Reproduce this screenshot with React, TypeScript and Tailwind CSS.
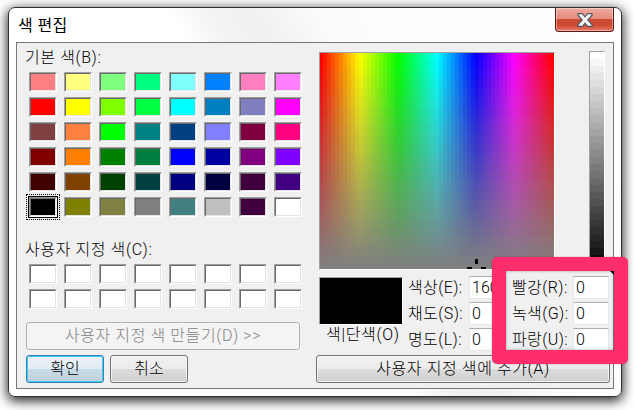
import type { ReactNode } from 'react';

const BASIC = [
  ['#ff8080', '#ffff80', '#80ff80', '#00ff80', '#80ffff', '#0080ff', '#ff80c0', '#ff80ff'],
  ['#ff0000', '#ffff00', '#80ff00', '#00ff40', '#00ffff', '#0080c0', '#8080c0', '#ff00ff'],
  ['#804040', '#ff8040', '#00ff00', '#008080', '#004080', '#8080ff', '#800040', '#ff0080'],
  ['#800000', '#ff8000', '#008000', '#008040', '#0000ff', '#0000a0', '#800080', '#8000ff'],
  ['#400000', '#804000', '#004000', '#004040', '#000080', '#000040', '#400040', '#400080'],
  ['#000000', '#808000', '#808040', '#808080', '#408080', '#c0c0c0', '#400040', '#ffffff'],
];
const CUSTOM = [Array(8).fill('#ffffff'), Array(8).fill('#ffffff')];

function Swatch({ color, selected }: { color: string; selected?: boolean }) {
  return (
    <div className="relative h-5 w-7 border border-b-white border-l-[#a0a0a0] border-r-white border-t-[#a0a0a0]">
      <div
        className="h-full w-full border border-b-[#e3e3e3] border-l-[#696969] border-r-[#e3e3e3] border-t-[#696969]"
        style={{ backgroundColor: color }}
      />
      {selected && (
        <>
          <div className="absolute -inset-[2px] border border-black" />
          <div className="absolute -inset-[4px] border border-dotted border-black" />
        </>
      )}
    </div>
  );
}

function Swatches({ rows, selected }: { rows: string[][]; selected?: boolean }) {
  return (
    <div className="ml-[3px] grid w-[273px] grid-cols-8 gap-x-[7px] gap-y-[5px]">
      {rows.map((r, i) =>
        r.map((c, j) => <Swatch key={`${i}-${j}`} color={c} selected={selected && i === 5 && j === 0} />),
      )}
    </div>
  );
}

function Spectrum() {
  return (
    <div className="relative h-[218px] w-[236px] overflow-hidden border border-b-white border-l-[#a0a0a0] border-r-white border-t-[#a0a0a0]">
      <div className="flex h-full overflow-hidden">
        {Array.from({ length: 59 }, (_, i) => (
          <div
            key={i}
            className={i === 0 ? 'w-[3px] shrink-0' : 'w-1 shrink-0'}
            style={{ backgroundColor: `hsl(${(i / 58) * 360} 100% 50%)` }}
          />
        ))}
      </div>
      <div className="absolute inset-0 flex flex-col overflow-hidden">
        {Array.from({ length: 31 }, (_, i) => (
          <div key={i} className="h-[7px] shrink-0" style={{ backgroundColor: `rgba(128,128,128,${i / 30})` }} />
        ))}
      </div>
      <svg className="absolute left-[146px] top-[206px]" width="20" height="20" shapeRendering="crispEdges">
        <path d="M9 0h3v5h-3zM1 8h5v3H1zM15 8h5v3h-5zM9 14h3v5h-3z" />
      </svg>
    </div>
  );
}

function Luminance() {
  return (
    <div className="h-[219px] w-4 overflow-hidden border border-b-white border-l-[#a0a0a0] border-r-white border-t-[#a0a0a0]">
      {Array.from({ length: 31 }, (_, i) => {
        const v = Math.max(0, Math.round(255 - i * 8.3));
        return <div key={i} className="h-[7px]" style={{ backgroundColor: `rgb(${v},${v},${v})` }} />;
      })}
    </div>
  );
}

function Button({ className, children }: { className: string; children: ReactNode }) {
  return (
    <button className={`flex h-7 items-center justify-center rounded-[3px] border ${className}`}>{children}</button>
  );
}

const NORMAL =
  'border-[#707070] bg-[linear-gradient(#f2f2f2,#ebebeb_50%,#dddddd_50%,#cfcfcf)] shadow-[inset_0_0_0_1px_#fafafacc]';

function Field({ label, value }: { label: string; value: string }) {
  return (
    <div className="flex items-center">
      <span className="w-[61px] whitespace-nowrap tracking-[0.4px]">{label}</span>
      <div className="flex h-[23px] w-9 items-center border border-[#e2e6ee] border-t-[#abadb3] bg-white pl-[2px]">
        {value}
      </div>
    </div>
  );
}

export default function App() {
  return (
    <div className="relative h-[410px] w-[634px] overflow-hidden bg-white pl-2 pt-[7px] font-['Roboto','Noto_Sans_CJK_KR',sans-serif] text-[16px] font-light leading-5 text-black">
      <div className="h-[390px] w-[614px] rounded-[7px] border border-[#303030] bg-[linear-gradient(58deg,#fff_0%,#fff_47%,#f4f4f4_51%,#f0f0f0_56%,#fcfcfc_65%,#fff)] shadow-[0_3px_12px_1px_rgba(0,0,0,0.85)]">
        <div className="flex h-[34px] justify-between pl-[9px] pr-[7px]">
          <h1 className="pt-2 text-[16px] font-normal tracking-[0.4px]">색 편집</h1>
          <button className="flex h-6 w-[59px] items-center justify-center rounded-b-[4px] border border-t-0 border-[#5c1a16] bg-[linear-gradient(#efaca0,#e58c7c_46%,#ca4a32_48%,#ce4a30_75%,#e9796a)] shadow-[inset_0_0_0_1px_#ffffff66]">
            <svg width="16" height="14" viewBox="0 0 16 14">
              <path
                d="M1 .7h4.4L8 3.8 10.6.7H15v1.5L10.8 7l4.2 4.5v1.8h-4.5L8 10.2l-2.5 3.1H1v-1.8L5.2 7 1 2.2z"
                fill="#f4f4f4"
                stroke="#535666"
                strokeWidth="1.2"
              />
            </svg>
          </button>
        </div>
        <div className="ml-[7px] flex h-[347px] w-[598px] border border-[#777] bg-[#f0f0f0]">
          <div className="ml-[8px] flex w-[275px] flex-col pl-px">
            <div className="-ml-px mt-[5px] h-6 tracking-[0.6px]">기본 색(B):</div>
            <Swatches rows={BASIC} selected />
            <div className="-ml-px mt-[22px] h-[25px] pt-px tracking-[0.6px]">사용자 지정 색(C):</div>
            <Swatches rows={CUSTOM} />
            <Button className="mt-[13px] w-[274px] border-[#adb2b5] bg-[#f4f4f4] tracking-[0.6px] text-[#838383]">
              사용자 지정 색 만들기(D) &gt;&gt;
            </Button>
            <div className="mt-[5px] flex gap-[6px]">
              <Button className="w-[78px] border-[#3c7fb1] bg-[linear-gradient(#edf3f7,#dfebf3_50%,#c8dce8_50%,#bdd0dc)] shadow-[inset_0_0_0_1px_#36cdf5]">
                확인
              </Button>
              <Button className={`w-[78px] ${NORMAL}`}>취소</Button>
            </div>
          </div>
          <div className="ml-4 flex w-[294px] flex-col">
            <div className="ml-[3px] mt-2 flex h-[226px] gap-[34px]">
              <div className="pt-px">
                <Spectrum />
              </div>
              <Luminance />
            </div>
            <div className="ml-[3px] flex h-[78px]">
              <div className="flex w-[84px] flex-col">
                <div className="h-12 border border-b-white border-l-[#a0a0a0] border-r-white border-t-[#a0a0a0] bg-black" />
                <div className="whitespace-nowrap pl-[7px] tracking-[0.7px]">색|단색(O)</div>
              </div>
              <div className="ml-[5px] mt-[-1px] flex h-[75px] flex-col justify-between">
                <Field label="색상(E):" value="160" />
                <Field label="채도(S):" value="0" />
                <Field label="명도(L):" value="0" />
              </div>
              <div className="ml-[7px] mt-[-1px] flex h-[75px] flex-col justify-between">
                <Field label="빨강(R):" value="0" />
                <Field label="녹색(G):" value="0" />
                <Field label="파랑(U):" value="0" />
              </div>
            </div>
            <Button className={`w-[294px] tracking-[0.6px] ${NORMAL}`}>사용자 지정 색에 추가(A)</Button>
          </div>
        </div>
      </div>
      <svg className="absolute left-[610px] top-[271px]" width="4" height="4">
        <path d="M0 0h4v4z" />
      </svg>
      <div className="absolute left-[492px] top-[257px] h-[107px] w-[136px] rounded-[5px] border-[14px] border-[#ff2d6b] shadow-[inset_0_0_3px_#00000055,0_0_2px_#00000044]" />
    </div>
  );
}
